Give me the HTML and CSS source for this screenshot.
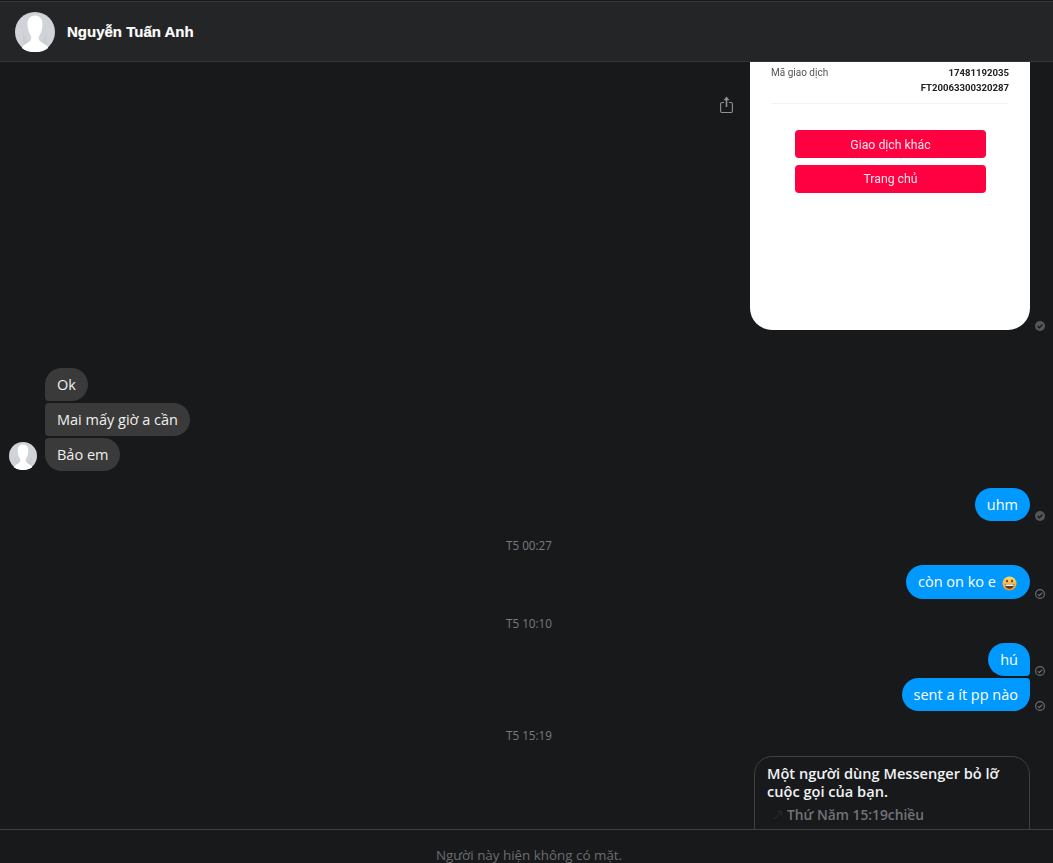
FILE: index.html
```html
<!DOCTYPE html>
<html lang="vi">
<head>
<meta charset="utf-8">
<title>Nguyễn Tuấn Anh</title>
<link rel="stylesheet" href="styles.css">
</head>
<body>
<svg class="defs" width="0" height="0" aria-hidden="true">
  <defs>
    <linearGradient id="emojiFace" x1="0" y1="0" x2="0" y2="1">
      <stop offset="0" stop-color="#fbdc6a"/>
      <stop offset="1" stop-color="#ee9430"/>
    </linearGradient>
    <symbol id="person" viewBox="0 0 40 40">
      <circle cx="20" cy="20" r="20" fill="#d0d3d8"/>
      <path d="M8 20c2 4 4 8 5 12l-5 3zM32 20c-2 4-4 8-5 12l5 3z" fill="#cacdd2"/>
      <path d="M20 3.500c-5 0-7.500 3.600-7.500 8.500 0 5 1.500 9 3.200 11.800.8 1.400.8 3.500-.3 5-1.500 2-5.500 3-7.700 5.500-.4.500-.7 1-.9 1.600A20 20 0 0 0 20 40a20 20 0 0 0 13.200-4.100c-.2-.6-.5-1.100-.9-1.600-2.200-2.500-6.200-3.500-7.700-5.500-1.100-1.500-1.100-3.600-.3-5 1.700-2.800 3.200-6.800 3.200-11.800C27.500 7.100 25 3.500 20 3.500z" fill="#fff"/>
    </symbol>
    <symbol id="seen" viewBox="0 0 10 10">
      <circle cx="5" cy="5" r="5" fill="#55575d"/>
      <path d="M2.600 5.100 4.300 6.800 7.500 3.500" fill="none" stroke="#17181a" stroke-width="1.400"/>
    </symbol>
    <symbol id="sent" viewBox="0 0 10 10">
      <circle cx="5" cy="5" r="4.400" fill="none" stroke="#6d6f74" stroke-width="1.100"/>
      <path d="M2.800 5.100 4.300 6.600 7.300 3.600" fill="none" stroke="#6d6f74" stroke-width="1.200"/>
    </symbol>
  </defs>
</svg>
<div class="app">
  <header class="topbar">
    <svg class="avatar-lg"><use href="#person"/></svg>
    <span class="name">Nguyễn Tuấn Anh</span>
  </header>

  <main class="thread">
    <div class="row row-out">
      <svg class="share" viewBox="0 0 13 17" aria-hidden="true">
        <path d="M6.500 11V3" fill="none" stroke="#8f9196" stroke-width="1.600"/>
        <path d="M3.500 4.200 6.500 .5l3 3.700z" fill="#8f9196"/>
        <path d="M4 6.500H2C1.200 6.500.6 7.100.6 7.900v7.200c0 .8.600 1.400 1.400 1.400h9c.8 0 1.400-.6 1.400-1.400V7.900c0-.8-.6-1.400-1.400-1.400H9" fill="none" stroke="#8f9196" stroke-width="1.100"/>
      </svg>
      <div class="receipt">
        <div class="receipt-row">
          <span class="receipt-label">Mã giao dịch</span>
          <span class="receipt-value">17481192035<br>FT20063300320287</span>
        </div>
        <div class="receipt-btn receipt-btn-first">Giao dịch khác</div>
        <div class="receipt-btn receipt-btn-next">Trang chủ</div>
      </div>
      <svg class="tick tick-image"><use href="#seen"/></svg>
    </div>

    <div class="group-in">
      <div class="avatar-col"><svg class="avatar-sm"><use href="#person"/></svg></div>
      <div class="stack-in">
        <div class="bubble bubble-in">Ok</div>
        <div class="bubble bubble-in">Mai mấy giờ a cần</div>
        <div class="bubble bubble-in">Bảo em</div>
      </div>
    </div>

    <div class="row row-out gap-uhm">
      <div class="bubble bubble-out">uhm</div>
      <svg class="tick"><use href="#seen"/></svg>
    </div>

    <div class="stamp">T5 00:27</div>

    <div class="row row-out">
      <div class="bubble bubble-out bubble-emoji">còn on ko e
        <svg class="emoji" viewBox="0 0 16 16" aria-hidden="true">
          <circle cx="8" cy="8" r="7.500" fill="url(#emojiFace)"/>
          <ellipse cx="5.300" cy="5.400" rx="1" ry="1.400" fill="#5a3a1c"/>
          <ellipse cx="10.700" cy="5.400" rx="1" ry="1.400" fill="#5a3a1c"/>
          <path d="M3 8.400h10c0 3-2.200 5.200-5 5.200s-5-2.200-5-5.200z" fill="#5a3a1c"/>
          <path d="M3.600 8.900h8.800v1.700H3.600z" fill="#fff"/>
        </svg>
      </div>
      <svg class="tick"><use href="#sent"/></svg>
    </div>

    <div class="stamp">T5 10:10</div>

    <div class="row row-out">
      <div class="bubble bubble-out bubble-top">hú</div>
      <svg class="tick"><use href="#sent"/></svg>
    </div>
    <div class="row row-out gap-tight">
      <div class="bubble bubble-out bubble-bottom">sent a ít pp nào</div>
      <svg class="tick"><use href="#sent"/></svg>
    </div>

    <div class="stamp">T5 15:19</div>

    <div class="row row-out row-call">
      <div class="call-card">
        <div class="call-title">Một người dùng Messenger bỏ lỡ cuộc gọi của bạn.</div>
        <div class="call-meta">
          <svg class="call-arrow" viewBox="0 0 10 10" aria-hidden="true">
            <path d="M1 9 8.500 1.500M4 1.500h4.500V6" fill="none" stroke="#2a2b2e" stroke-width="1"/>
          </svg>
          <span>Thứ Năm 15:19chiều</span>
        </div>
      </div>
    </div>
  </main>

  <footer class="composer">Người này hiện không có mặt.</footer>
</div>
</body>
</html>
```
FILE: styles.css
```css
* { box-sizing: border-box; }
html, body { height: 100%; }
body {
  margin: 0;
  background: #18191b;
  color: #e4e6eb;
  font-family: "Open Sans", "Noto Sans", "Liberation Sans", sans-serif;
  overflow: hidden;
}
.defs { display: block; height: 0; }
.app { height: 100vh; padding-top: 1px; display: flex; flex-direction: column; }

.topbar {
  flex: none;
  height: 61px;
  padding: 10px 15px 0;
  display: flex;
  align-items: flex-start;
  gap: 12px;
  background: #242527;
  border-top: 1px solid #38393b;
  border-bottom: 1px solid #333437;
}
.avatar-lg { width: 40px; height: 40px; flex: none; }
.name {
  font-family: "Liberation Sans", sans-serif;
  font-size: 15px;
  font-weight: 700;
  line-height: 40px;
  color: #fff;
  -webkit-text-stroke: 0.2px #fff;
}

.thread {
  flex: 1;
  min-height: 0;
  overflow: hidden;
  display: flex;
  flex-direction: column;
}
.row { display: flex; align-items: flex-end; justify-content: flex-end; }
.row-out { padding-right: 8px; }
.gap-uhm { margin-top: 17px; }
.gap-tight { margin-top: 2px; }
.tick { width: 10px; height: 10px; flex: none; margin-left: 5px; }
.tick-image { margin-bottom: -1px; }

.share { width: 13px; height: 17px; flex: none; align-self: flex-start; margin: 34px 17px 0 0; }
.receipt {
  width: 280px;
  height: 268px;
  padding: 3px 21px 0;
  background: #fff;
  border-radius: 0 0 22px 22px;
  font-family: Roboto, sans-serif;
  display: flex;
  flex-direction: column;
}
.receipt-row {
  display: flex;
  justify-content: space-between;
  height: 39px;
  border-bottom: 1px solid #f3f3f4;
  font-size: 10px;
  line-height: 15px;
  filter: blur(0.3px);
}
.receipt-label { color: #555; }
.receipt-value { color: #222; font-size: 9.6px; font-weight: 700; text-align: right; }
.receipt-btn {
  width: 191px;
  height: 28px;
  margin: 26px 0 0 24px;
  border-radius: 4px;
  background: #ff0040;
  color: #ffe6ec;
  font-size: 12.3px;
  line-height: 28px;
  text-align: center;
  filter: blur(0.3px);
}
.receipt-btn-first { line-height: 30px; }
.receipt-btn-next { margin-top: 6.500px; }

.group-in { display: flex; align-items: flex-end; margin-top: 38px; padding-left: 9px; }
.avatar-col { width: 36px; flex: none; padding-bottom: 1px; }
.avatar-sm { width: 28px; height: 28px; display: block; }
.stack-in { display: flex; flex-direction: column; align-items: flex-start; gap: 2px; }

.bubble {
  height: 33px;
  padding: 0 12px;
  font-size: 14.500px;
  line-height: 33px;
  border-radius: 17px;
  white-space: nowrap;
}
.bubble-in { background: #3a3a3a; color: #f0f0f0; }
.stack-in .bubble-in:nth-child(1) { border-radius: 17px 17px 17px 4px; }
.stack-in .bubble-in:nth-child(2) { border-radius: 4px 17px 17px 4px; }
.stack-in .bubble-in:nth-child(3) { border-radius: 4px 17px 17px 17px; }
.bubble-out { background: #0099ff; color: #fff; }
.bubble-top { border-radius: 17px 17px 4px 17px; }
.bubble-bottom { border-radius: 17px 4px 17px 17px; }
.bubble-emoji { height: 34px; line-height: 34px; display: flex; align-items: center; gap: 6px; padding-right: 13px; }
.emoji { width: 15px; height: 15px; flex: none; margin-top: 2px; }

.stamp {
  margin: 16px 0 12px;
  padding-left: 5px;
  height: 16px;
  line-height: 16px;
  text-align: center;
  font-size: 11.700px;
  font-weight: 500;
  color: #7a7b7f;
}

.row-call { padding-right: 23px; margin-top: 1px; }
.call-card {
  width: 276px;
  height: 110px;
  padding: 7px 12px;
  border: 1px solid #3e4042;
  border-radius: 18px;
}
.call-title { font-size: 14.600px; font-weight: 600; line-height: 18px; color: #f2f3f5; }
.call-meta {
  display: flex;
  align-items: center;
  gap: 4px;
  margin: 6px 0 0 6px;
  font-size: 13.800px;
  font-weight: 600;
  line-height: 18px;
  color: #717379;
}
.call-arrow { width: 10px; height: 10px; flex: none; }

.composer {
  flex: none;
  height: 34px;
  padding: 17px 0 0 5px;
  border-top: 1px solid #3e4042;
  text-align: center;
  font-size: 13.400px;
  line-height: 16px;
  color: #6b6d70;
}
```
